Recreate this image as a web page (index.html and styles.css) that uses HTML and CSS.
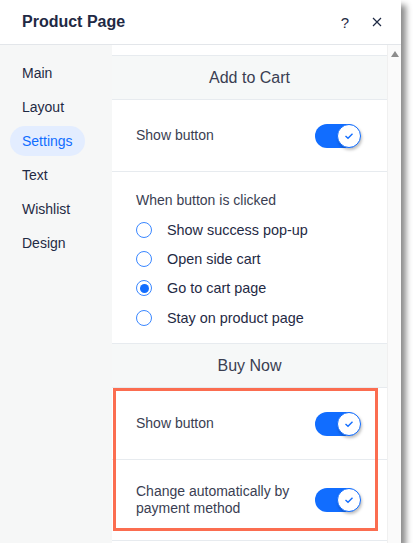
FILE: index.html
```html
<!DOCTYPE html>
<html lang="en">
<head>
    <meta charset="UTF-8">
    <meta name="viewport" content="width=device-width, initial-scale=1.0">
    <title>Product Page</title>
    <link rel="stylesheet" href="styles.css">
</head>
<body>
    <div class="panel">
        <div class="header">
            <h1>Product Page</h1>
            <div class="header-actions">
                <span class="help">?</span>
                <svg class="close" width="10" height="10" viewBox="0 0 10 10">
                    <path d="M1 1L9 9M9 1L1 9" stroke="#1f2a44" stroke-width="1.2" fill="none"/>
                </svg>
            </div>
        </div>

        <div class="body">
            <div class="sidebar">
                <div class="nav-item">Main</div>
                <div class="nav-item">Layout</div>
                <div class="nav-item active">Settings</div>
                <div class="nav-item">Text</div>
                <div class="nav-item">Wishlist</div>
                <div class="nav-item">Design</div>
            </div>

            <div class="content">
                <div class="section-title">Add to Cart</div>

                <div class="row">
                    <div class="row-label">Show button</div>
                    <div class="toggle"><div class="knob"><svg width="10" height="8" viewBox="0 0 10 8"><path d="M1.5 4L4 6.2L8.5 1.8" stroke="#116dff" stroke-width="1.4" fill="none"/></svg></div></div>
                </div>

                <div class="radio-group">
                    <div class="group-label">When button is clicked</div>
                    <div class="radio"><span class="dot"></span>Show success pop-up</div>
                    <div class="radio"><span class="dot"></span>Open side cart</div>
                    <div class="radio"><span class="dot checked"></span>Go to cart page</div>
                    <div class="radio"><span class="dot"></span>Stay on product page</div>
                </div>

                <div class="section-title">Buy Now</div>

                <div class="highlight">
                    <div class="row">
                        <div class="row-label">Show button</div>
                        <div class="toggle"><div class="knob"><svg width="10" height="8" viewBox="0 0 10 8"><path d="M1.5 4L4 6.2L8.5 1.8" stroke="#116dff" stroke-width="1.4" fill="none"/></svg></div></div>
                    </div>
                    <div class="row tall">
                        <div class="row-label">Change automatically by<br>payment method</div>
                        <div class="toggle"><div class="knob"><svg width="10" height="8" viewBox="0 0 10 8"><path d="M1.5 4L4 6.2L8.5 1.8" stroke="#116dff" stroke-width="1.4" fill="none"/></svg></div></div>
                    </div>
                </div>
            </div>

            <div class="scrollbar">
                <div class="arrow"></div>
            </div>
        </div>
    </div>
</body>
</html>
```

FILE: styles.css
```css
body {
    margin: 0;
    background: #fff;
    font-family: "Liberation Sans", Arial, sans-serif;
    color: #32364a;
}
.panel {
    width: 401px;
    height: 543px;
    background: #fff;
    box-shadow: 5px 5px 6px rgba(0,0,0,0.45);
    display: flex;
    flex-direction: column;
    overflow: hidden;
}
.header {
    height: 45px;
    box-sizing: border-box;
    border-bottom: 1px solid #e3e6ea;
    display: flex;
    align-items: center;
    justify-content: space-between;
    padding: 0 19px 0 22px;
}
h1 {
    margin: 0;
    font-size: 16px;
    font-weight: bold;
    color: #1f2a44;
}
.header-actions {
    display: flex;
    align-items: center;
    gap: 23px;
}
.help {
    font-size: 15px;
    color: #1f2a44;
}
.body {
    flex: 1;
    display: flex;
    min-height: 0;
}
.sidebar {
    width: 112px;
    background: #f6f7f7;
    padding-top: 13px;
    box-sizing: border-box;
}
.nav-item {
    height: 30px;
    margin: 0 0 4px 10px;
    padding: 0 12px;
    display: inline-flex;
    align-items: center;
    font-size: 14px;
    color: #1f2a44;
    border-radius: 15px;
}
.active {
    background: #e3edff;
    color: #116dff;
}
.content {
    flex: 1;
    padding-top: 10px;
}
.section-title {
    height: 43px;
    background: #f6f8f8;
    border-top: 1px solid #e7ebef;
    border-bottom: 1px solid #e7ebef;
    display: flex;
    align-items: center;
    justify-content: center;
    font-size: 16px;
    color: #3a3e52;
}
.row {
    height: 71px;
    border-bottom: 1px solid #e7ebef;
    display: flex;
    align-items: center;
    justify-content: space-between;
    padding: 0 27px 0 24px;
}
.row.tall {
    height: 80px;
}
.row-label {
    font-size: 14px;
    line-height: 17px;
    color: #3a3e52;
}
.toggle {
    width: 45px;
    height: 24px;
    border-radius: 12px;
    background: #116dff;
    position: relative;
}
.knob {
    position: absolute;
    right: -1px;
    top: 0;
    width: 22px;
    height: 22px;
    border: 1px solid #116dff;
    border-radius: 50%;
    background: #fff;
    box-shadow: 1px 2px 3px rgba(0,0,0,0.25);
    display: flex;
    align-items: center;
    justify-content: center;
}
.radio-group {
    height: 171px;
    box-sizing: border-box;
    padding: 20px 0 0 24px;
}
.group-label {
    font-size: 14px;
    color: #3a3e52;
    margin-bottom: 7px;
}
.radio {
    height: 29.4px;
    display: flex;
    align-items: center;
    gap: 15px;
    font-size: 14.4px;
    color: #1f2a44;
}
.dot {
    width: 14px;
    height: 14px;
    border: 1.2px solid #3a87ff;
    border-radius: 50%;
    position: relative;
}
.dot.checked::after {
    content: "";
    position: absolute;
    left: 2.5px;
    top: 2.5px;
    width: 9px;
    height: 9px;
    border-radius: 50%;
    background: #116dff;
}
.highlight {
    position: relative;
}
.highlight::after {
    content: "";
    position: absolute;
    left: 1px;
    top: 0;
    right: 9px;
    bottom: 10px;
    border: 3px solid #fb6d50;
}
.scrollbar {
    width: 14px;
    background: #fafafa;
    border-left: 1px solid #f0f0f0;
    padding-top: 6px;
    box-sizing: border-box;
}
.arrow {
    margin-left: 3px;
    width: 0;
    height: 0;
    border-left: 4px solid transparent;
    border-right: 4px solid transparent;
    border-bottom: 6px solid #8c8c8c;
}
```
